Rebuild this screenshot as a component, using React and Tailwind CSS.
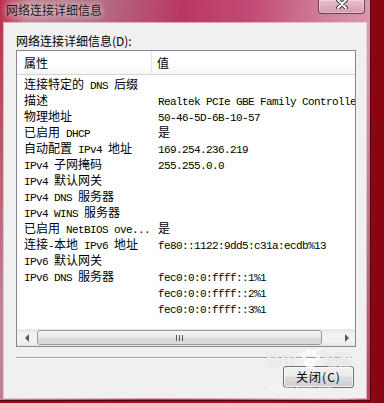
import React from 'react'

const CJK = /([\u3400-\u9fff\uff00-\uffef]+)/

const rows = [
  ['连接特定的 DNS 后缀', ''],
  ['描述', 'Realtek PCIe GBE Family Controller'],
  ['物理地址', '50-46-5D-6B-10-57'],
  ['已启用 DHCP', '是'],
  ['自动配置 IPv4 地址', '169.254.236.219'],
  ['IPv4 子网掩码', '255.255.0.0'],
  ['IPv4 默认网关', ''],
  ['IPv4 DNS 服务器', ''],
  ['IPv4 WINS 服务器', ''],
  ['已启用 NetBIOS ove...', '是'],
  ['连接-本地 IPv6 地址', 'fe80::1122:9dd5:c31a:ecdb%13'],
  ['IPv6 默认网关', ''],
  ['IPv6 DNS 服务器', 'fec0:0:0:ffff::1%1'],
  ['', 'fec0:0:0:ffff::2%1'],
  ['', 'fec0:0:0:ffff::3%1'],
]

// SimSun-like look: CJK at 12px, latin at 6px per char
function Mixed({ text }) {
  const parts = text.split(CJK).filter(Boolean)
  return parts.map((p, i) =>
    CJK.test(p) ? (
      <span key={i} className="font-['Noto_Sans_CJK_SC',sans-serif] text-[12px]">{p}</span>
    ) : (
      <span key={i} className="font-['Liberation_Mono',monospace] text-[11px] tracking-[-0.6px] whitespace-pre">{p}</span>
    )
  )
}

function Arrow({ dir }) {
  return dir === 'left' ? (
    <div className="w-0 h-0 border-y-[4px] border-y-transparent border-r-[4px] border-r-[#5a5a5a]" />
  ) : (
    <div className="w-0 h-0 border-y-[4px] border-y-transparent border-l-[4px] border-l-[#5a5a5a]" />
  )
}

export default function App() {
  return (
    <div className="w-[384px] h-[403px] overflow-hidden bg-[linear-gradient(90deg,#9c0a18,#b01020_60%,#8a0412)] relative">
      <div className="w-[371px] h-[401px] flex flex-col border-r border-b border-[#4a0610] bg-[linear-gradient(95deg,#bd2a4a_0%,#c08494_7%,#b47486_22%,#b83862_45%,#c24a76_62%,#d07e9a_80%,#d89aae_92%,#c03a58_100%)]">
        {/* title bar */}
        <div className="h-[23px] flex items-start shrink-0">
          <div className="pl-[6px] pt-[2px] leading-[16px] text-[12px] text-[#1a1a1a] font-['Noto_Sans_CJK_SC',sans-serif] [text-shadow:0_0_6px_rgba(255,255,255,0.8),0_0_10px_rgba(255,255,255,0.5)]">
            网络连接详细信息
          </div>
          <div className="ml-auto mr-[5px] w-[47px] h-[14px] rounded-b-[4px] border border-t-0 border-[#6e4452] bg-[linear-gradient(#e7bfcb,#d79bb0)] shadow-[inset_0_0_0_1px_rgba(255,255,255,0.35)] flex justify-center">
            <svg width="14" height="10" viewBox="0 0 14 10" className="-mt-[1px]">
              <path d="M3 1 L11 9 M11 1 L3 9" stroke="#3a3a3a" strokeWidth="4" strokeLinecap="round" />
              <path d="M3 1 L11 9 M11 1 L3 9" stroke="#ffffff" strokeWidth="2" strokeLinecap="round" />
            </svg>
          </div>
        </div>

        {/* client area */}
        <div className="ml-[4px] w-[362px] h-[375px] bg-[#f0f0f0] shadow-[0_0_0_1px_rgba(255,255,255,0.55)] flex flex-col px-[12px] pt-[10px] relative">
          <div className="leading-[16px] text-[12px] text-black font-['Noto_Sans_CJK_SC',sans-serif]">
            网络连接详细信息(D):
          </div>

          <div className="mt-[1px] w-[340px] h-[297px] border border-[#828790] bg-white flex flex-col overflow-hidden">
            <div className="h-[24px] shrink-0 flex border-b border-[#d5d5d5] bg-[linear-gradient(#ffffff_60%,#f6f7f9)] text-[12px] text-black font-['Noto_Sans_CJK_SC',sans-serif]">
              <div className="w-[135px] pl-[7px] flex items-center border-r border-[#e3e6ea]">属性</div>
              <div className="pl-[5px] flex items-center">值</div>
            </div>

            {rows.map(([label, value], i) => (
              <div key={i} className="h-[16px] shrink-0 flex text-black leading-[16px]">
                <div className="w-[135px] pl-[7px] whitespace-nowrap overflow-hidden">
                  <Mixed text={label} />
                </div>
                <div className="pl-[6px] whitespace-nowrap overflow-hidden flex-1">
                  <Mixed text={value} />
                </div>
              </div>
            ))}

            <div className="flex-1" />

            {/* horizontal scrollbar */}
            <div className="h-[17px] shrink-0 flex bg-[linear-gradient(#e6e6e6,#f2f2f2_30%,#f2f2f2_70%,#e6e6e6)]">
              <div className="w-[20px] flex items-center justify-center">
                <Arrow dir="left" />
              </div>
              <div className="w-[285px] my-[1px] rounded-[3px] border border-[#9a9a9a] bg-[linear-gradient(#f6f6f6,#e8e8e8_50%,#d6d6d6_51%,#dcdcdc)] flex items-center justify-center gap-[2px]">
                <div className="w-[1px] h-[6px] bg-[#5a5a5a]" />
                <div className="w-[1px] h-[6px] bg-[#5a5a5a]" />
                <div className="w-[1px] h-[6px] bg-[#5a5a5a]" />
              </div>
              <div className="w-[16px]" />
              <div className="w-[17px] flex items-center justify-center">
                <Arrow dir="right" />
              </div>
            </div>
          </div>

          <div className="mt-[10px] w-[336px] h-[2px] border-t border-[#a0a0a0] border-b border-b-white" />

          <div className="mt-[7px] flex justify-end">
            <button className="w-[71px] h-[22px] rounded-[3px] border border-[#707070] bg-[linear-gradient(#f2f2f2,#ebebeb_45%,#dddddd_50%,#cfcfcf)] shadow-[inset_0_0_0_1px_rgba(255,255,255,0.7)] text-[12px] text-black font-['Noto_Sans_CJK_SC',sans-serif] leading-[16px] tracking-[1px]">
              关闭(C)
            </button>
          </div>

          {/* watermark */}
          <div className="absolute left-[262px] top-[326px] flex items-end text-white/75 font-['Liberation_Sans',sans-serif] font-bold text-[20px] leading-[20px] pointer-events-none [text-shadow:0_0_1px_rgba(160,160,160,0.6)]">
            Bai
            <svg width="22" height="20" viewBox="0 0 22 20" className="mx-[2px] opacity-80">
              <ellipse cx="5" cy="6" rx="2.5" ry="3.2" fill="white" />
              <ellipse cx="10" cy="3.5" rx="2.5" ry="3.2" fill="white" />
              <ellipse cx="15.5" cy="4" rx="2.5" ry="3.2" fill="white" />
              <ellipse cx="19" cy="9" rx="2.2" ry="2.8" fill="white" />
              <ellipse cx="11" cy="14" rx="6" ry="5" fill="white" />
            </svg>
            <span className="text-[14px] font-['Noto_Sans_CJK_SC',sans-serif]">经验</span>
          </div>
          <div className="absolute left-[264px] top-[362px] text-white/60 text-[8px] leading-[8px] font-['Liberation_Sans',sans-serif] pointer-events-none">
            jingyan.baidu.com
          </div>
        </div>
      </div>
    </div>
  )
}
